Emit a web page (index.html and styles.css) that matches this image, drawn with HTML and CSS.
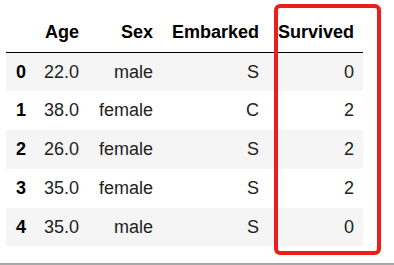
FILE: index.html
```html
<!DOCTYPE html>
<html>
<head>
<meta charset="utf-8">
<link rel="stylesheet" href="styles.css">
</head>
<body>
<div class="page">
  <div class="frame">
    <table class="df">
      <colgroup>
        <col class="c-idx"><col class="c-age"><col class="c-sex"><col class="c-emb"><col class="c-sur">
      </colgroup>
      <thead>
        <tr><th></th><th>Age</th><th>Sex</th><th>Embarked</th><th>Survived</th></tr>
      </thead>
      <tbody>
        <tr><th>0</th><td>22.0</td><td>male</td><td>S</td><td>0</td></tr>
        <tr><th>1</th><td>38.0</td><td>female</td><td>C</td><td>2</td></tr>
        <tr><th>2</th><td>26.0</td><td>female</td><td>S</td><td>2</td></tr>
        <tr><th>3</th><td>35.0</td><td>female</td><td>S</td><td>2</td></tr>
        <tr><th>4</th><td>35.0</td><td>male</td><td>S</td><td>0</td></tr>
      </tbody>
    </table>
    <div class="highlight"></div>
  </div>
</div>
</body>
</html>
```
FILE: styles.css
```css
html, body {
  margin: 0;
  padding: 0;
  background: #ffffff;
}
.page {
  width: 394px;
  height: 263px;
  border-bottom: 2px solid #a8a8a8;
  font-family: "Liberation Sans", Arial, sans-serif;
  font-size: 18px;
}
.frame {
  position: relative;
  padding: 13px 0 0 6px;
}
.df {
  border-collapse: collapse;
  table-layout: fixed;
  width: 357px;
  color: #222222;
}
.c-idx { width: 28px; }
.c-age { width: 54px; }
.c-sex { width: 74px; }
.c-emb { width: 106px; }
.c-sur { width: 95px; }
.df th, .df td {
  text-align: right;
  vertical-align: middle;
  padding: 9px 9px;
  line-height: 20.7px;
  white-space: nowrap;
}
.df th {
  font-weight: bold;
  color: #000000;
}
.df tbody th {
  text-align: left;
  padding-left: 10px;
}
.df thead {
  border-bottom: 1px solid #000000;
}
.df tbody tr:nth-child(odd) {
  background: #f5f5f5;
}
.highlight {
  position: absolute;
  left: 274px;
  top: 4px;
  width: 99px;
  height: 243px;
  border: 4.5px solid #ee1d1d;
  border-radius: 6px;
}
```
